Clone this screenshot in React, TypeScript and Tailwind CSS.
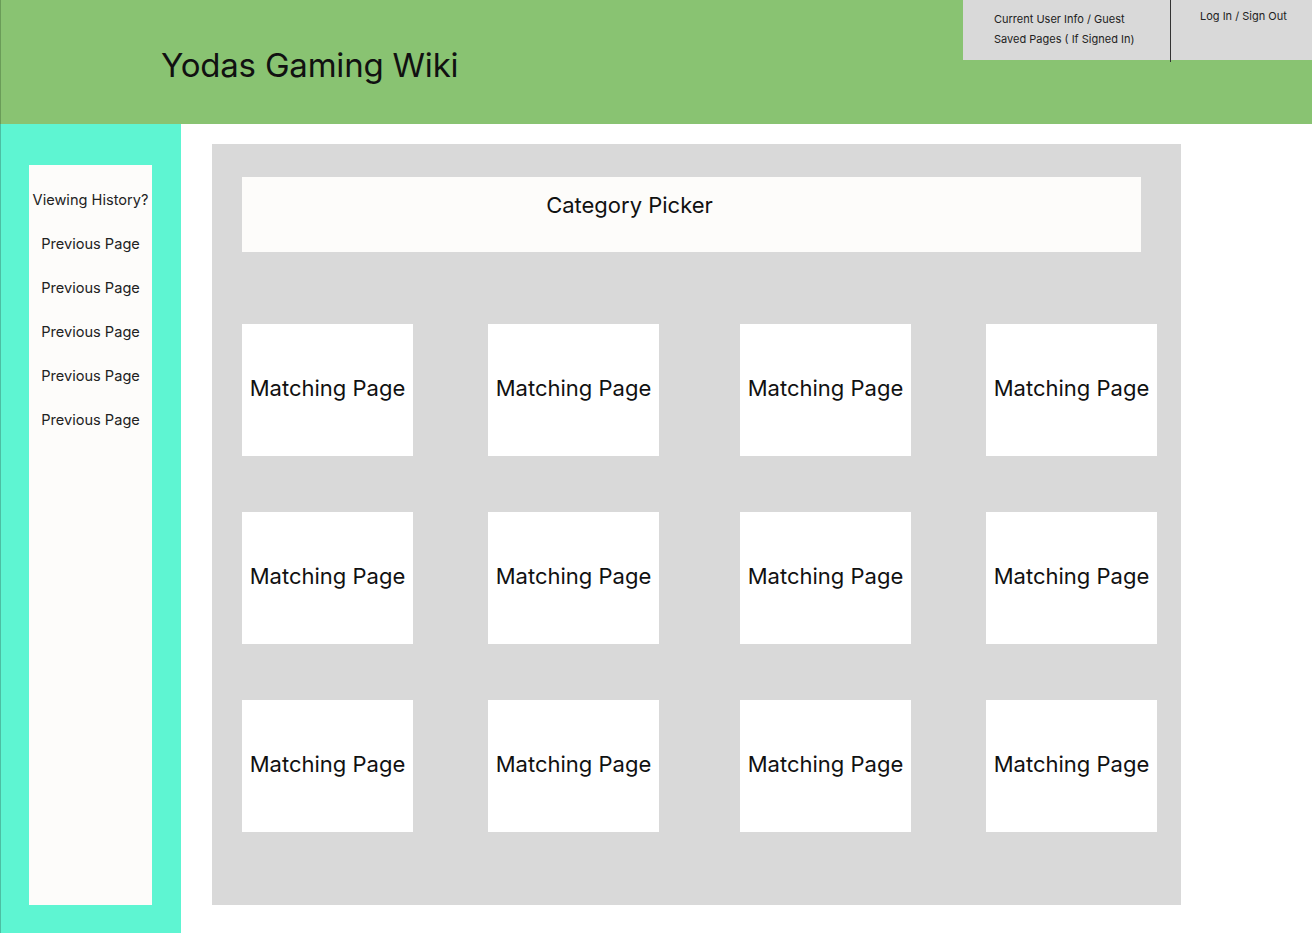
const history = ["Previous Page", "Previous Page", "Previous Page", "Previous Page", "Previous Page"];
const cards = Array.from({ length: 12 }, (_, i) => i);

export default function App() {
  return (
    <div className="w-[1312px] h-[933px] bg-white overflow-hidden text-[#111] font-['Inter','Noto_Sans',sans-serif]">
      {/* header */}
      <div className="h-[124px] bg-[#89c372] border-l border-[#6a9c58] flex items-start">
        <div className="pl-[160px] pt-[44px] text-[33px] leading-[42px] tracking-[-0.2px] text-[#111]">
          Yodas Gaming Wiki
        </div>
        <div className="ml-auto flex h-[60px]">
          <div className="w-[207px] bg-[#d9d9d9] pl-[31px] pt-[9px] text-[11px] leading-[20px] text-[#222]">
            <div>Current User Info / Guest</div>
            <div>Saved Pages ( If Signed In)</div>
          </div>
          <div className="w-px h-[62px] bg-[#333]" />
          <div className="w-[141px] bg-[#d9d9d9] pl-[29px] pt-[8px] text-[11px] leading-[16px] text-[#222]">
            Log In / Sign Out
          </div>
        </div>
      </div>

      <div className="flex h-[809px]">
        {/* sidebar */}
        <div className="w-[181px] bg-[#5ef5d2] border-l border-[#4cbfa3] pl-[28px] pt-[41px]">
          <div className="w-[123px] h-[740px] bg-[#fdfcfa] flex flex-col items-center pt-[25px] text-[14.6px] text-[#222]">
            <div className="h-[20px] leading-[20px] whitespace-nowrap">Viewing History?</div>
            {history.map((h, i) => (
              <div key={i} className="mt-[24px] h-[20px] leading-[20px]">
                {h}
              </div>
            ))}
          </div>
        </div>

        {/* main */}
        <div className="pl-[31px] pt-[20px]">
          <div className="w-[969px] h-[761px] bg-[#d9d9d9] pl-[30px] pt-[33px]">
            <div className="w-[899px] h-[75px] bg-[#fdfcfa] flex justify-center pt-[14px]">
              <span className="text-[22px] leading-[28px] mr-[124px]">Category Picker</span>
            </div>
            <div className="mt-[72px] grid grid-cols-[246px_252px_246px_171px] gap-y-[56px]">
              {cards.map((c) => (
                <div key={c} className="w-[171px] h-[132px] bg-white flex items-center justify-center pb-[4px]">
                  <span className="text-[22px] leading-[28px] whitespace-nowrap">Matching Page</span>
                </div>
              ))}
            </div>
          </div>
        </div>
      </div>
    </div>
  );
}
